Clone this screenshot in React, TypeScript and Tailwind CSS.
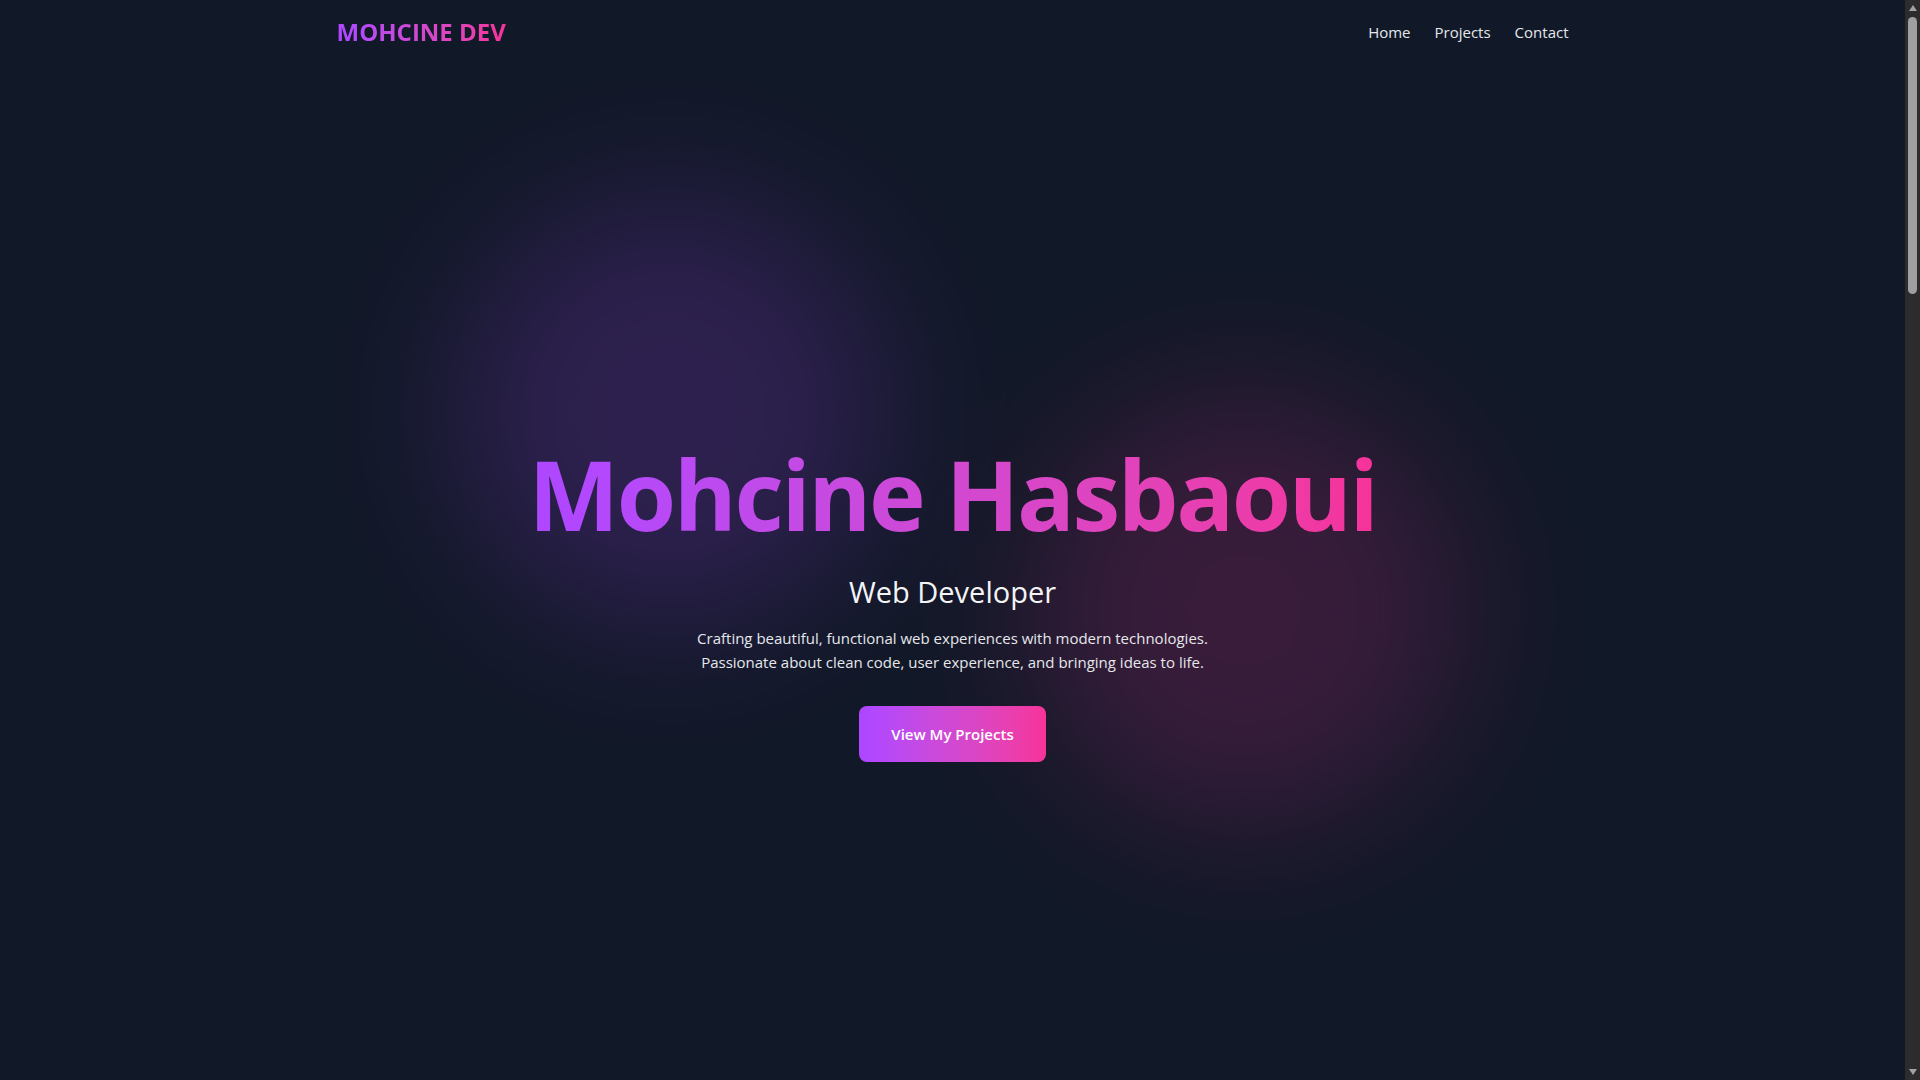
function FakeScrollbar() {
  // window scrollbar as it appears in the capture
  return (
    <div className="fixed right-0 top-0 z-50 flex h-screen w-[15px] flex-col items-center bg-[#2c2c2c] py-[5px]">
      <div className="h-0 w-0 border-x-[4px] border-b-[6px] border-x-transparent border-b-[#a3a3a3]" />
      <div className="mt-[6px] h-[277px] w-[9px] rounded-full bg-[#9f9f9f]" />
      <div className="flex-1" />
      <div className="h-0 w-0 border-x-[4px] border-t-[6px] border-x-transparent border-t-[#a3a3a3]" />
    </div>
  )
}

export default function App() {
  return (
    <div className="min-h-screen bg-[#111827] text-white font-['Open_Sans',sans-serif]">
      <div className="mr-[15px]">
        <nav className="mx-auto flex h-16 max-w-7xl items-center justify-between px-6">
          <a
            href="#home"
            className="bg-gradient-to-r from-purple-500 to-pink-500 bg-clip-text text-2xl font-bold text-transparent"
          >
            MOHCINE DEV
          </a>
          <div className="flex items-center gap-6 text-[15px] text-gray-200">
            <a href="#home" className="hover:text-white">Home</a>
            <a href="#projects" className="hover:text-white">Projects</a>
            <a href="#contact" className="hover:text-white">Contact</a>
          </div>
        </nav>

        <section id="home" className="relative flex min-h-screen items-center justify-center overflow-hidden">
          {/* blurred glow blobs */}
          <div className="absolute left-[450px] top-[128px] h-[440px] w-[440px] rounded-full bg-purple-500 opacity-[0.18] blur-[72px]" />
          <div className="absolute right-[440px] top-[326px] h-[440px] w-[440px] rounded-full bg-pink-500 opacity-[0.17] blur-[72px]" />

          <div className="relative z-10 px-6 text-center">
            <h1 className="mb-8 bg-gradient-to-r from-purple-500 to-pink-500 bg-clip-text text-8xl leading-none font-bold tracking-tight text-transparent">
              Mohcine Hasbaoui
            </h1>
            <h2 className="mb-4 text-[29px] leading-9 text-gray-100">Web Developer</h2>
            <p className="mx-auto mb-8 max-w-2xl text-[15px] leading-6 text-gray-200">
              Crafting beautiful, functional web experiences with modern technologies.
              <br />
              Passionate about clean code, user experience, and bringing ideas to life.
            </p>
            <a
              href="#projects"
              className="inline-block rounded-lg bg-gradient-to-r from-purple-500 to-pink-500 px-8 py-4 text-[15px] leading-6 font-semibold text-white"
            >
              View My Projects
            </a>
          </div>
        </section>
      </div>
      <FakeScrollbar />
    </div>
  )
}
